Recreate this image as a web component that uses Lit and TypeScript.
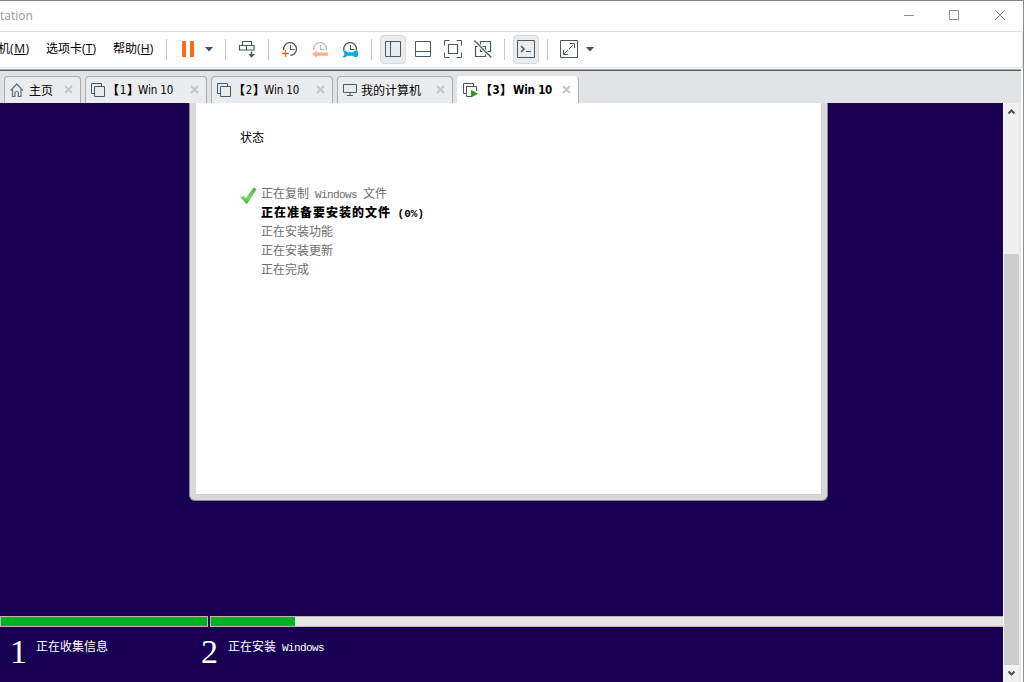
import { LitElement, html, svg, css } from "lit";
import { customElement, property } from "lit/decorators.js";

const ink = "#445a68";

const clock = (c: string) => svg`
  <path d="M1.900 9.500A6.400 6.400 0 1 1 8.200 14.400" fill="none" stroke=${c} stroke-width="1.3" />
  <path d="M8.500 4v4.500H12.500" fill="none" stroke=${c} stroke-width="1.200" />`;

const icons: Record<string, unknown> = {
  pause: svg`<path d="M2 1h4v16H2zM10 1h4v16h-4z" fill="#ff6a1a" />`,
  keys: svg`<path d="M3.500.5h9v4h-9zM.5 4.500h7v4.500h-7zM7.500 4.500h7.500v4.500H7.500z" fill="none" stroke=${ink} stroke-width="1.2" />
    <path d="M12.500 10.500v4" stroke=${ink} stroke-width="1.500" /><path d="M9.300 13h6.500l-3.250 3.700z" fill=${ink} />`,
  snap: svg`${clock(ink)}<path d="M0 9h5v7H0z" fill="#fff" /><path d="M0 12.500h7M3.500 9v7" stroke="#f06a2a" fill="none" stroke-width="1.3" />`,
  revert: svg`${clock("#b4bcc2")}<path d="M0 9.500h16V16H0z" fill="#fff" /><path d="M0 13l4.500-3.500v2H16v3.200H4.500v2z" fill="#ffb08c" />`,
  manage: svg`${clock(ink)}<path d="M0 9.500h16V16H0z" fill="#fff" />
    <path d="M.3 9.600h3.200l1.700 1.700h6l1.500-1.500h2.800L16 11.500v3l-1 1.500h-2.500l-1.500-1.300H5.200L3.500 16.200H.3L2.300 14v-2.200z" fill="#00afd5" />`,
  side: svg`<path d="M.5.5h15v15H.5zM5.500.5v15" fill="none" stroke=${ink} />`,
  bottom: svg`<path d="M.5.5h15v15H.5zM.5 10.500h15" fill="none" stroke=${ink} />`,
  full: svg`<path d="M.5 5.500V.5H5.500M12.500.5h5V5.500M17.500 12.500v5H12.500M5.500 17.500H.5V12.500" fill="none" stroke=${ink} /><path d="M4.500 4.500h9v9h-9z" fill="none" stroke=${ink} stroke-width="1.200" />`,
  unity: svg`<path d="M6.500 1.500h10v10h-10zM1.500 6.500h10v10h-10z" fill="none" stroke=${ink} stroke-width="1.200" /><path d="M1 1.500l15.500 15.500" stroke="#fff" stroke-width="3.500" /><path d="M.3.5l17 17" stroke=${ink} stroke-width="1.200" />`,
  term: svg`<path d="M.5.5h17v17H.5z" fill="none" stroke=${ink} /><path d="M4 6l3 3-3 3" fill="none" stroke=${ink} stroke-width="1.500" /><path d="M9 11.500h5" stroke=${ink} />`,
  stretch: svg`<path d="M.5.5h17v17H.5z" fill="none" stroke=${ink} /><path d="M10 3.500h4.500V8M3.500 10v4.500H8" fill="none" stroke=${ink} /><path d="M4 14l10-10" stroke=${ink} stroke-dasharray="5.500 1.500" />`,
  home: svg`<path d="M.6 7.500L6.700 1l6.100 6.500M2.500 6v7.500H5V9.500Q6.700 7 8.400 9.500V13.500H11V6" fill="none" stroke="#64727c" stroke-width="1.200" />`,
  vm: svg`<path d="M3.500 10.500h-3V.5h10v3M3.500 3.500h10v10h-10z" fill="none" stroke=${ink} />`,
  vmrun: svg`<path d="M3.500 10.500h-3V.5h10v3M13.500 8V3.500h-10v10H8" fill="none" stroke=${ink} /><path d="M8 6.800v7.700l7-3.800z" fill="#3a9612" />`,
  monitor: svg`<path d="M.5 1.500h13v8H.5zM7 9.500v2.500M4 12.500h6" fill="none" stroke=${ink} />`,
  caret: svg`<path d="M0 0h8L4 4.500z" fill="#3c505c" />`,
  close: svg`<path d="M1 1l7 7M8 1L1 8" stroke="#c6c6c6" stroke-width="2" />`,
  wmin: svg`<path d="M0 5.500h10" stroke="#8e8e8e" />`,
  wmax: svg`<path d="M.5.5h9v9h-9z" fill="none" stroke="#8e8e8e" />`,
  wclose: svg`<path d="M0 0l10 10M10 0L0 10" stroke="#8e8e8e" />`,
  up: svg`<path d="M.5 5.500L3.500 2.500l3 3" fill="none" stroke="#505050" stroke-width="2" />`,
  down: svg`<path d="M.5 1.500L3.500 4.500l3-3" fill="none" stroke="#505050" stroke-width="2" />`,
};

@customElement("ui-icon")
class UiIcon extends LitElement {
  static styles = css`:host { display: block; flex: none; } svg { display: block; overflow: visible; }`;
  @property() name = "";
  @property({ type: Number }) w = 16;
  @property({ type: Number }) h = 16;
  render() {
    return html`<svg width=${this.w} height=${this.h} viewBox="0 0 ${this.w} ${this.h}">${icons[this.name]}</svg>`;
  }
}

@customElement("app-root")
class AppRoot extends LitElement {
  static styles = css`
    :host {
      display: flex; flex-direction: column; box-sizing: border-box; width: 1024px; height: 682px; overflow: hidden;
      background: #fff; border-top: 1px solid #84868e; border-right: 1px solid #8d8b8c;
      font: 12px/16px "Noto Sans CJK SC", sans-serif; color: #000; white-space: nowrap;
    }
    .title { display: flex; height: 30px; flex: none; border-bottom: 1px solid #e0e0e0; align-items: center; color: #999; }
    .caption { font-family: "Open Sans", sans-serif; font-size: 12px; flex: 1; }
    .win { display: flex; padding: 0 18px 2px 0; }
    .wmax { margin: 0 36px 0 35px; }
    .bar { display: flex; height: 34px; flex: none; align-items: center; padding-bottom: 1px; border-bottom: 1px solid #e3e3e3; border-right: 1px solid #e3e3e3; }
    .menu { height: 18px; line-height: 16px; margin-top: -1px; flex: none; }
    .menu i { font: normal 12px/16px "Open Sans", sans-serif; letter-spacing: 0.2px; }
    .m1 { width: 46px; } .m2 { width: 67px; } .m3 { width: 53px; }
    .m1 span { margin-left: -2px; }
    .m1 i { letter-spacing: 0.6px; }
    .sep { width: 1px; height: 21px; background: #c8c8c8; flex: none; margin-top: 1px; }
    .g8 { margin-left: 8px; } .g9 { margin-left: 9px; } .g12 { margin-left: 12px; } .g13 { margin-left: 13px; } .g14 { margin-left: 14px; }
    .on { display: flex; align-items: center; justify-content: center; box-sizing: border-box; width: 26px; height: 29px; flex: none;
      border: 1px solid #d6d8d9; border-radius: 4px; background: #ebecee; }
    .rule { height: 3px; flex: none; display: grid; grid-template-rows: 1px 1px 1px; margin-right: 2px; }
    .rule b:nth-child(1) { background: #fbfbfb; } .rule b:nth-child(2) { background: #a8a8ac; } .rule b:nth-child(3) { background: #606066; }
    .tabs { display: flex; align-items: flex-end; gap: 4px; height: 32px; flex: none; background: #e2e3e5; padding-left: 4px; margin-right: 2px; }
    .tab { display: flex; align-items: center; box-sizing: border-box; height: 27px; padding: 0 7px 0 5px; background: #ebecee;
      border: 1px solid #acacae; border-bottom: 0; border-radius: 4px 4px 0 0; }
    .tab ui-icon:last-child { margin-left: auto; margin-top: -2px; }
    .t0 { width: 77px; } .t1 { width: 122px; } .t3 { width: 116px; } .t4 { width: 122px; }
    .active { background: #fff; font-weight: bold; border-color: #fff #acacae #fff #fff; }
    .label { display: flex; margin-left: 4px; }
    .t0 .label { margin-left: 5px; }
    .vmn { margin-left: 2px; font-family: "DejaVu Sans Condensed", "Noto Sans CJK SC"; font-size: 11.5px; }
    .vmn .br { font-family: "Noto Sans CJK SC"; font-size: 12px; width: 12px; font-weight: 900; }
    .vmn .no { width: 8px; text-align: center; }
    .vmn .nm { margin-left: -1px; letter-spacing: -0.1px; }
    .active .vmn { margin-left: 2px; }
    .active .nm { margin-left: 1px; letter-spacing: -0.2px; }
    .view { flex: 1; display: flex; min-height: 0; }
    .guest { width: 1003px; flex: none; background: #180052; color: #fff; display: flex; flex-direction: column; }
    .dialog { box-sizing: border-box; width: 639px; height: 398px; margin-left: 189px; background: #d9d9d9; border: 1px solid #8d879e;
      border-top: 0; border-radius: 0 0 6px 6px; padding: 0 5px 5px 6px; display: flex; flex: none; }
    .sheet { flex: 1; background: #fff; border: 1px solid #cfcfcf; border-top: 0; border-left: 0; color: #000; padding: 26px 0 0 44px; }
    .list { display: grid; grid-template-columns: 21px auto; grid-auto-rows: 19px; margin-top: 38px; color: #6d6d6d; line-height: 19px; }
    .list span { grid-column: 2; }
    .list svg { grid-column: 1; grid-row: 1; margin-top: 4px; }
    .list .now { color: #000; font-weight: 900; letter-spacing: 1px; }
    .mono { font-family: "Liberation Mono", monospace; font-size: 11px; line-height: 1; white-space: pre; letter-spacing: -0.6px; }
    .now .mono { letter-spacing: 0; }
    .progress { display: flex; gap: 2px; margin-top: 115px; height: 11px; flex: none; }
    .pb { box-sizing: border-box; border: 1px solid #bcb8b4; background: #e6e6e6; }
    .pb1 { width: 208px; } .pb2 { flex: 1; border-right: 0; }
    .fill { height: 100%; background: #06b025; }
    .fill2 { width: 84px; }
    .steps { display: grid; grid-template-columns: 26px 165px 27px auto; padding: 5px 0 0 10px; }
    .num { font: 34px/38px "Liberation Serif", serif; padding-top: 1px; }
    .steps .txt { margin-top: 6px; }
    .scroll { width: 16px; flex: none; margin-left: 1px; box-sizing: border-box; background: #f0f0f0; display: flex; flex-direction: column; border-right: 1px solid #f0f0f0; }
    .arrow { height: 17px; display: grid; place-items: center; }
    .track { flex: 1; padding-top: 134px; display: flex; }
    .thumb { flex: 1; background: #cdcdcd; }
    .edge { width: 1px; background: #dedede; }
  `;

  private menu(cls: string, text: string, key: string) {
    return html`<div class="menu ${cls}"><span>${text}<i>(<u>${key}</u>)</i></span></div>`;
  }

  private tab(cls: string, icon: string, w: number, label: unknown) {
    return html`<div class="tab ${cls}"><ui-icon name=${icon} w=${w} h="14"></ui-icon>${label}<ui-icon name="close" w="9" h="9"></ui-icon></div>`;
  }

  private vm(n: number) {
    return html`<span class="label vmn"><span class="br">【</span><span class="no">${n}</span><span class="br">】</span><span class="nm">Win 10</span></span>`;
  }

  render() {
    return html`
      <div class="title"><span class="caption">tation</span>
        <div class="win">
          <ui-icon name="wmin" w="10" h="10"></ui-icon><ui-icon class="wmax" name="wmax" w="10" h="10"></ui-icon><ui-icon name="wclose" w="10" h="10"></ui-icon>
        </div>
      </div>
      <div class="bar">
        ${this.menu("m1", "机", "M")}${this.menu("m2", "选项卡", "T")}${this.menu("m3", "帮助", "H")}
        <i class="sep"></i>
        <ui-icon class="g13" name="pause" w="16" h="18"></ui-icon>
        <ui-icon class="g9" name="caret" w="8" h="4"></ui-icon>
        <i class="sep g12"></i>
        <ui-icon class="g13" name="keys" w="16" h="16"></ui-icon>
        <i class="sep g13"></i>
        <ui-icon class="g13" name="snap"></ui-icon>
        <ui-icon class="g14" name="revert"></ui-icon>
        <ui-icon class="g14" name="manage"></ui-icon>
        <i class="sep g13"></i>
        <div class="on g8"><ui-icon name="side"></ui-icon></div>
        <ui-icon class="g9" name="bottom"></ui-icon>
        <ui-icon class="g13" name="full" w="18" h="18"></ui-icon>
        <ui-icon class="g12" name="unity" w="18" h="18"></ui-icon>
        <i class="sep g12"></i>
        <div class="on g8"><ui-icon name="term" w="18" h="18"></ui-icon></div>
        <i class="sep g8"></i>
        <ui-icon class="g12" name="stretch" w="18" h="18"></ui-icon>
        <ui-icon class="g8" name="caret" w="8" h="4"></ui-icon>
      </div>
      <div class="rule"><b></b><b></b><b></b></div>
      <div class="tabs">
        ${this.tab("t0", "home", 14, html`<span class="label">主页</span>`)}
        ${this.tab("t1", "vm", 14, this.vm(1))}
        ${this.tab("t1", "vm", 14, this.vm(2))}
        ${this.tab("t3", "monitor", 14, html`<span class="label">我的计算机</span>`)}
        ${this.tab("t4 active", "vmrun", 15, this.vm(3))}
      </div>
      <div class="view">
        <div class="guest">
          <div class="dialog"><div class="sheet">
            <div>状态</div>
            <div class="list">
              <svg width="17" height="18" viewBox="0 0 17 18"><defs><linearGradient id="g" x1="0" y1="0" x2="0" y2="1"><stop offset="0" stop-color="#3faf3f" /><stop offset=".6" stop-color="#6fe05c" /><stop offset="1" stop-color="#35b52c" /></linearGradient></defs>
                <path d="M.8 10.500l2.700-1.300 2.500 2.300L13.800.8 16.300 2 6.800 17z" fill="url(#g)" stroke="#58b94e" stroke-width=".5" /></svg>
              <span>正在复制<span class="mono"> Windows </span>文件</span>
              <span class="now">正在准备要安装的文件<span class="mono"> (0%)</span></span>
              <span>正在安装功能</span>
              <span>正在安装更新</span>
              <span>正在完成</span>
            </div>
          </div></div>
          <div class="progress">
            <div class="pb pb1"><div class="fill"></div></div>
            <div class="pb pb2"><div class="fill fill2"></div></div>
          </div>
          <div class="steps">
            <span class="num">1</span><span class="txt">正在收集信息</span>
            <span class="num">2</span><span class="txt">正在安装<span class="mono"> Windows</span></span>
          </div>
        </div>
        <div class="scroll">
          <div class="arrow"><ui-icon name="up" w="7" h="7"></ui-icon></div>
          <div class="track"><div class="thumb"></div></div>
          <div class="arrow"><ui-icon name="down" w="7" h="7"></ui-icon></div>
        </div>
        <div class="edge"></div>
      </div>
    `;
  }
}
